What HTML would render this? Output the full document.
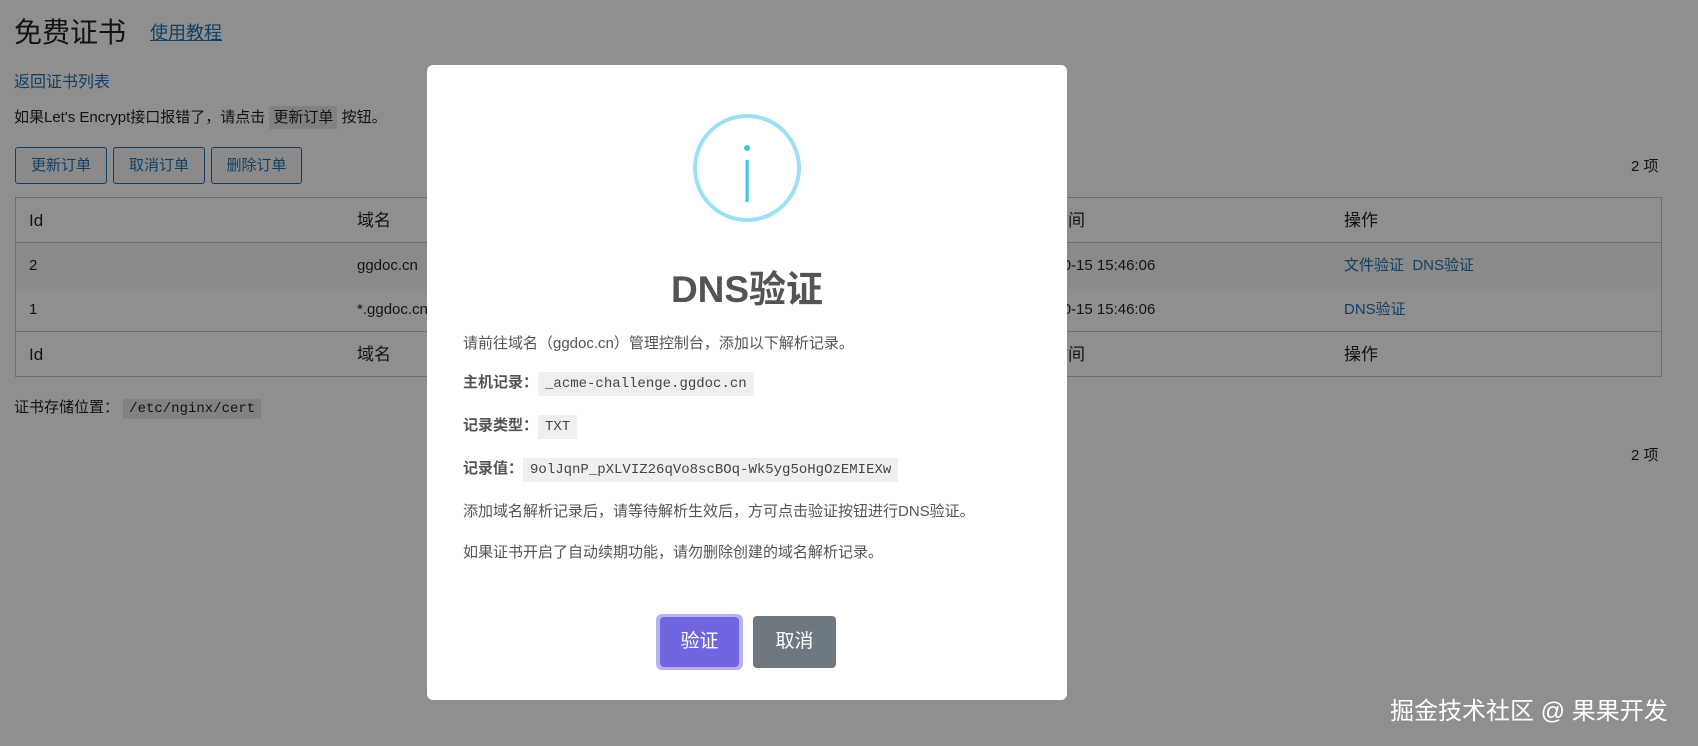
<!DOCTYPE html>
<html><head><meta charset="utf-8">
<style>
*{margin:0;padding:0;box-sizing:border-box}
body{width:1698px;height:746px;overflow:hidden;background:#fff;font-family:"Liberation Sans","Noto Sans CJK SC",sans-serif;color:#1d2327;position:relative;font-size:15px}
.a{position:absolute;white-space:nowrap}
.tbl .a{line-height:24px}
a{color:#2271b1}
.btn{position:absolute;top:147px;height:37px;border:1px solid #2271b1;border-radius:3px;color:#2271b1;font-size:15px;line-height:35px;text-align:center;background:#f6f7f7}
.tbl{position:absolute;left:15px;top:197px;width:1647px;height:180px;border:1px solid #c3c4c7}
.row{position:absolute;left:0;width:100%}
.code{background:#e8e8e8;padding:2px 6px;font-family:"Liberation Mono",monospace;font-size:14px}
#ov{position:absolute;left:0;top:0;width:1698px;height:746px;background:rgba(0,0,0,.44)}
.m{position:absolute;left:427px;top:65px;width:640px;height:635px;background:#fff;border-radius:6px;color:#545454}
.mt{position:absolute;left:36px;font-size:15px;white-space:nowrap}
.mc{background:#efefef;padding:4px 7px;font-family:"Liberation Mono","DejaVu Sans Mono",monospace;font-size:14px;color:#444}
</style></head><body>
<div class="a" style="left:14px;top:11px;font-size:28px;color:#1d2327">免费证书</div>
<div class="a" style="left:150px;top:19px;font-size:18px"><a style="text-decoration:underline">使用教程</a></div>
<div class="a" style="left:14px;top:68px;font-size:16px;color:#2271b1">返回证书列表</div>
<div class="a" style="left:14px;top:106px;font-size:15px">如果Let's Encrypt接口报错了，请点击 <span style="background:#e6e6e6;padding:3px 4px">更新订单</span> 按钮。</div>
<div class="btn" style="left:15px;width:92px">更新订单</div>
<div class="btn" style="left:113px;width:92px">取消订单</div>
<div class="btn" style="left:211px;width:91px">删除订单</div>
<div class="a" style="left:1631px;top:155px;font-size:15px">2 项</div>
<div class="tbl">
 <div class="row" style="top:0;height:45px;border-bottom:1px solid #c3c4c7;background:#fff"></div>
 <div class="row" style="top:45px;height:46px;background:#f6f7f7"></div>
 <div class="row" style="top:91px;height:43px;background:#fff;border-bottom:1px solid #c3c4c7"></div>
 <div class="a" style="left:13px;top:11px;font-size:17px">Id</div>
 <div class="a" style="left:341px;top:11px;font-size:17px">域名</div>
 <div class="a" style="left:1035px;top:11px;font-size:17px">时间</div>
 <div class="a" style="left:1328px;top:11px;font-size:17px">操作</div>
 <div class="a" style="left:13px;top:56px;font-size:15px">2</div>
 <div class="a" style="left:341px;top:56px;font-size:15px">ggdoc.cn</div>
 <div class="a" style="left:1000px;top:56px;font-size:15px">2024-10-15 15:46:06</div>
 <div class="a" style="left:1328px;top:56px;font-size:15px;color:#2271b1">文件验证&nbsp; DNS验证</div>
 <div class="a" style="left:13px;top:100px;font-size:15px">1</div>
 <div class="a" style="left:341px;top:100px;font-size:15px">*.ggdoc.cn</div>
 <div class="a" style="left:1000px;top:100px;font-size:15px">2024-10-15 15:46:06</div>
 <div class="a" style="left:1328px;top:100px;font-size:15px;color:#2271b1">DNS验证</div>
 <div class="a" style="left:13px;top:145px;font-size:17px">Id</div>
 <div class="a" style="left:341px;top:145px;font-size:17px">域名</div>
 <div class="a" style="left:1035px;top:145px;font-size:17px">时间</div>
 <div class="a" style="left:1328px;top:145px;font-size:17px">操作</div>
</div>
<div class="a" style="left:14px;top:396px;font-size:15px">证书存储位置： <span class="code">/etc/nginx/cert</span></div>
<div class="a" style="left:1631px;top:444px;font-size:15px">2 项</div>
<div id="ov"></div>
<div class="m">
 <svg style="position:absolute;left:265px;top:48px" width="110" height="110" viewBox="0 0 110 110">
  <circle cx="55" cy="55" r="52" fill="none" stroke="#9de0f6" stroke-width="4"/>
  <circle cx="55" cy="35" r="3" fill="#3fc3ee"/>
  <rect x="53.5" y="47" width="3.2" height="42" fill="#3fc3ee"/>
 </svg>
 <div class="a" style="left:0;width:640px;text-align:center;top:194px;font-size:37px;font-weight:bold;color:#545454">DNS验证</div>
 <div class="mt" style="top:267px">请前往域名（ggdoc.cn）管理控制台，添加以下解析记录。</div>
 <div class="mt" style="top:306px"><b>主机记录：</b><span class="mc">_acme-challenge.ggdoc.cn</span></div>
 <div class="mt" style="top:349px"><b>记录类型：</b><span class="mc">TXT</span></div>
 <div class="mt" style="top:392px"><b>记录值：</b><span class="mc">9olJqnP_pXLVIZ26qVo8scBOq-Wk5yg5oHgOzEMIEXw</span></div>
 <div class="mt" style="top:435px">添加域名解析记录后，请等待解析生效后，方可点击验证按钮进行DNS验证。</div>
 <div class="mt" style="top:476px">如果证书开启了自动续期功能，请勿删除创建的域名解析记录。</div>
 <div style="position:absolute;left:229px;top:549px;width:87px;height:56px;border-radius:6px;background:#b8b3f0"></div>
 <div style="position:absolute;left:233px;top:552px;width:79px;height:50px;border-radius:4px;background:#7066e0;color:#fff;font-size:19px;line-height:50px;text-align:center">验证</div>
 <div style="position:absolute;left:326px;top:551px;width:83px;height:52px;border-radius:4px;background:#6e7881;color:#fff;font-size:19px;line-height:52px;text-align:center">取消</div>
</div>
<div class="a" style="left:1390px;top:691px;font-size:24px;color:#fff">掘金技术社区 @ 果果开发</div>
</body></html>
